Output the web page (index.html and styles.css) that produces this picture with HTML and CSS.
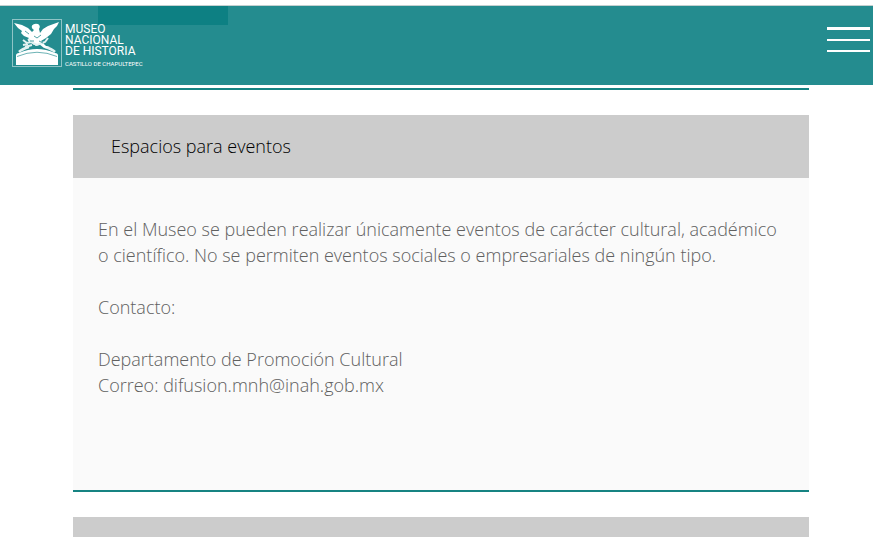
FILE: index.html
```html
<!DOCTYPE html>
<html lang="es">
<head>
<meta charset="utf-8">
<meta name="viewport" content="width=device-width, initial-scale=1">
<title>Museo Nacional de Historia</title>
<link rel="stylesheet" href="styles.css">
</head>
<body>
<header class="site-header">
  <span class="header-tab"></span>
  <a class="brand" href="#">
    <svg class="brand-mark" viewBox="0 0 50 48" aria-hidden="true">
      <rect x="0.5" y="0.5" width="49" height="47" fill="none" stroke="#8fc4c6"/>
      <path fill="#fff" d="M4 46V36.500Q4 34 7 34Q25 26 43 34Q46 34 46 36.500V46Z"/>
      <path fill="none" stroke="#6db3b5" d="M5 37.500Q25 29 45 37.500"/>
      <path fill="none" stroke="#e4f2f2" stroke-width="2.500" d="M7 33Q10 30 17 28M33 28Q40 30 43 33"/>
      <path fill="#fff" d="M2 4L10 6L16 9L20 13L22 11Q19 9 20 6.500Q22 4 26 5Q29 7 27 10L28 14L31 10L36 7L47 3L45 7L42 10L39 15L34 19L29 22L34 27L38 28L32 29L27 25L24 27L20 24L16 22L17 19L12 17L9 14L10 12L6 9Z"/>
      <path fill="none" stroke="#e4f2f2" stroke-width="2" d="M11 21L15 24L19 23L25 26L33 23L36 19M11 26L16 25M16 20L22 25M13 28L20 26"/>
      <path fill="none" stroke="#248c8f" stroke-width=".8" d="M22 17L25 19L29 16M18 22L22 22M27 22L31 24M13 12L17 15"/>
    </svg>
    <span class="brand-text">
      <span class="brand-name">MUSEO<br>NACIONAL<br>DE HISTORIA</span>
      <span class="brand-place">CASTILLO DE CHAPULTEPEC</span>
    </span>
  </a>
  <button class="menu-button" type="button" aria-label="Menú">
    <span class="bar bar-thick"></span>
    <span class="bar"></span>
    <span class="bar"></span>
  </button>
</header>
<main class="accordion">
  <section class="item">
    <h2 class="item-heading"><button class="item-toggle" type="button" aria-expanded="true">Espacios para eventos</button></h2>
    <div class="item-body">
      <p>En el Museo se pueden realizar únicamente eventos de carácter cultural, académico o científico. No se permiten eventos sociales o empresariales de ningún tipo.</p>
      <p>Contacto:</p>
      <p>Departamento de Promoción Cultural<br>Correo: difusion.mnh@inah.gob.mx</p>
    </div>
  </section>
  <div class="item-next"></div>
</main>
</body>
</html>
```
FILE: styles.css
```css
* { box-sizing: border-box; }

body {
  display: flex;
  flex-direction: column;
  margin: 0;
  height: 100vh;
  overflow: hidden;
  background: #fff;
  font: 300 18px/26px "Open Sans", sans-serif;
  color: #606060;
}

.site-header {
  position: relative;
  display: flex;
  flex: none;
  justify-content: space-between;
  align-items: flex-start;
  height: 80px;
  margin-top: 5px;
  padding: 13px 3px 0 12px;
  border-top: 1px solid #c4d0d0;
  background: #248c8f;
}

.header-tab {
  position: absolute;
  top: 0;
  left: 98px;
  width: 130px;
  height: 19px;
  background: #0d8083;
}

.brand {
  position: relative;
  display: flex;
  gap: 3px;
  color: #fff;
  text-decoration: none;
}

.brand-mark { width: 50px; height: 48px; }

.brand-text {
  display: flex;
  flex-direction: column;
  gap: 3px;
  padding-top: 5px;
  font-family: Roboto, sans-serif;
  font-weight: 400;
  white-space: nowrap;
}

.brand-name { font-size: 12px; line-height: 11px; }
.brand-place { font-size: 6px; line-height: 7px; }

.menu-button {
  display: flex;
  flex-direction: column;
  gap: 9px;
  width: 43px;
  margin: 8px 0 0;
  padding: 0;
  border: 0;
  background: none;
}

.bar { width: 100%; height: 2px; background: #fff; }
.bar-thick { height: 3px; }

.accordion {
  display: flex;
  flex: 1;
  flex-direction: column;
  min-height: 0;
  margin: 3px 64px 0 73px;
  border-top: 2px solid #168382;
}

.item {
  flex: none;
  margin: 25px 0;
  border-bottom: 2px solid #168382;
}

.item-heading { margin: 0; font: inherit; }

.item-toggle {
  display: block;
  width: 100%;
  height: 63px;
  padding: 0 38px 2px;
  border: 0;
  background: #ccc;
  color: #000;
  font: inherit;
  text-align: left;
}

.item-body {
  padding: 38px 25px 66px;
  background: #fafafa;
}

.item-body p { margin: 0 0 26px; }

.item-next { flex: 1; background: #ccc; }
```
